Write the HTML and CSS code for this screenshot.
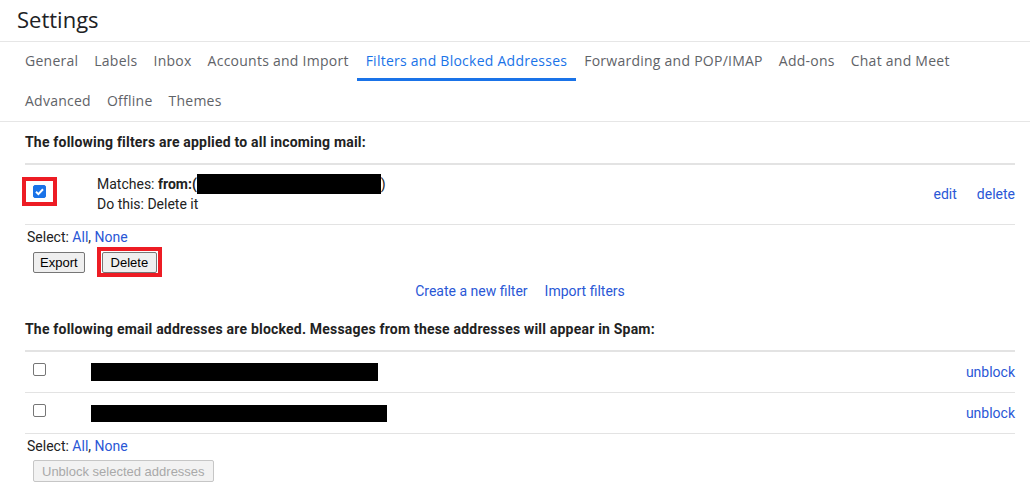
FILE: index.html
```html
<!DOCTYPE html>
<html>
<head>
<meta charset="utf-8">
<link rel="stylesheet" href="styles.css">
</head>
<body>
<header class="title">Settings</header>
<nav class="tabs">
  <a class="tab">General</a>
  <a class="tab">Labels</a>
  <a class="tab">Inbox</a>
  <a class="tab">Accounts and Import</a>
  <a class="tab active">Filters and Blocked Addresses</a>
  <a class="tab">Forwarding and POP/IMAP</a>
  <a class="tab">Add-ons</a>
  <a class="tab">Chat and Meet</a>
  <a class="tab">Advanced</a>
  <a class="tab">Offline</a>
  <a class="tab">Themes</a>
</nav>
<main class="content">
  <h2 class="heading">The following filters are applied to all incoming mail:</h2>
  <div class="list filters">
    <div class="row filter-row">
      <div class="cell-check">
        <span class="highlight chk-hl"><span class="cbox checked"><svg viewBox="0 0 13 13" width="13" height="13"><path d="M3 6.8 L5.4 9.1 L10 4.2" fill="none" stroke="#fff" stroke-width="2"/></svg></span></span>
      </div>
      <div class="filter-desc">
        <div>Matches: <b>from:(</b><span class="redact r1"></span>)</div>
        <div>Do this: Delete it</div>
      </div>
      <div class="actions"><a class="link">edit</a><a class="link">delete</a></div>
    </div>
  </div>
  <div class="select">Select: <a class="link">All</a>, <a class="link">None</a></div>
  <div class="buttons">
    <button class="btn export">Export</button>
    <span class="highlight btn-hl"><button class="btn">Delete</button></span>
  </div>
  <div class="center-links"><a class="link">Create a new filter</a><a class="link">Import filters</a></div>

  <h2 class="heading heading2">The following email addresses are blocked. Messages from these addresses will appear in Spam:</h2>
  <div class="list blocked">
    <div class="row block-row">
      <div class="cell-check"><span class="cbox"></span></div>
      <span class="redact r2"></span>
      <a class="link unblock">unblock</a>
    </div>
    <div class="row block-row">
      <div class="cell-check"><span class="cbox"></span></div>
      <span class="redact r3"></span>
      <a class="link unblock">unblock</a>
    </div>
  </div>
  <div class="select select2">Select: <a class="link">All</a>, <a class="link">None</a></div>
  <div class="buttons buttons2"><button class="btn disabled" disabled>Unblock selected addresses</button></div>
</main>
</body>
</html>
```
FILE: styles.css
```css
* { box-sizing: border-box; }
body {
  margin: 0;
  font-family: Roboto, "Liberation Sans", Arial, sans-serif;
  color: #222;
  background: #fff;
}
.title {
  height: 42px;
  padding: 5px 0 0 17px;
  font-size: 22px;
  line-height: 28px;
  color: #202124;
  font-family: "Open Sans", Roboto, sans-serif;
  border-bottom: 1px solid #e6e6e6;
}
.tabs {
  display: flex;
  flex-wrap: wrap;
  padding: 0 60px 0 17px;
  border-bottom: 1px solid #e6e6e6;
}
.tab {
  height: 39px;
  padding: 0 8px;
  font-family: "Open Sans", Roboto, sans-serif;
  font-size: 14px;
  letter-spacing: 0.25px;
  line-height: 37px;
  color: #5f6368;
  border-bottom: 3px solid transparent;
  white-space: nowrap;
}
.tab:nth-child(n+9) { height: 40px; line-height: 39px; }
.tab.active {
  color: #1a73e8;
  border-bottom-color: #1a73e8;
  padding: 0 9px;
}
.content {
  padding: 0 15px 0 25px;
}
.heading {
  margin: 0;
  height: 41px;
  font-size: 14px;
  font-weight: bold;
  line-height: 40px;
  letter-spacing: 0.2px;
  color: #222;
}
.list {
  border-top: 2px solid #e3e3e3;
}
.row {
  display: flex;
  align-items: center;
  border-bottom: 1px solid #e3e3e3;
}
.filter-row { height: 60px; }
.cell-check {
  width: 72px;
  display: flex;
  align-items: center;
  padding-left: 8px;
}
.highlight {
  display: inline-flex;
  border: 4px solid #ed1c24;
}
.chk-hl {
  margin-left: -11px;
  margin-top: -6px;
  padding: 4px 7px;
}
.cbox {
  display: inline-block;
  width: 13px;
  height: 13px;
  border: 1px solid #767676;
  border-radius: 2px;
  background: #fff;
}
.cbox.checked {
  background: #1a73e8;
  border-color: #1a73e8;
}
.cbox.checked svg { display: block; margin: -1px; }
.filter-desc {
  flex: 1;
  font-size: 14px;
  line-height: 20px;
  color: #222;
  margin-top: -2px;
}
.redact {
  display: inline-block;
  background: #000;
  vertical-align: top;
}
.r1 { width: 184px; height: 20px; }
.actions {
  display: flex;
  gap: 20px;
  font-size: 14px;
  margin-top: -2px;
}
.link {
  color: #2a57d6;
  cursor: pointer;
}
.select {
  font-size: 14px;
  padding: 4px 0 0 2px;
  line-height: 17px;
  color: #222;
}
.buttons {
  display: flex;
  align-items: flex-start;
  padding: 1px 0 0 8px;
  gap: 12px;
  height: 31px;
}
.btn {
  font-family: "Liberation Sans", Arial, sans-serif;
  font-size: 13px;
  height: 21px;
  padding: 0 6px;
  background: #efefef;
  border: 1px solid #767676;
  border-radius: 2px;
  color: #000;
}
.export { margin-top: 5px; }
.btn-hl { padding: 1px 1px 0; }
.btn-hl .btn { padding: 0 8px; }
.btn.disabled {
  color: #a9a9a9;
  border-color: #c6c6c6;
  background: #f2f2f2;
  height: 22px;
  padding: 0 8px;
}
.buttons2 { height: 33px; padding-top: 5px; }
.center-links {
  display: flex;
  justify-content: center;
  gap: 17px;
  font-size: 14px;
  padding-top: 6px;
  line-height: 17px;
  height: 31px;
}
.heading2 { height: 42px; padding-top: 4px; line-height: 34px; }
.block-row { height: 41px; }
.blocked .cbox { margin-bottom: 6px; }
.r2 { width: 287px; height: 18px; }
.r3 { width: 296px; height: 17px; }
.unblock {
  margin-left: auto;
  font-size: 14px;
}
.blocked .cell-check { width: 66px; }
```
